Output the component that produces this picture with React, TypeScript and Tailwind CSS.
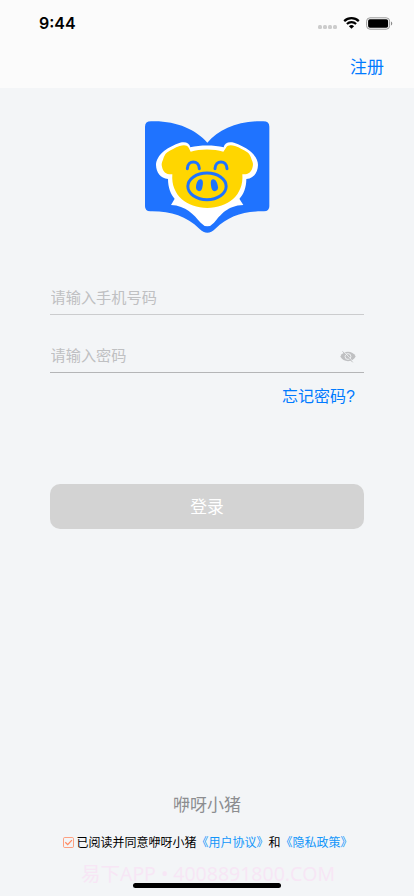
import { useState } from "react";

function StatusBar() {
  return (
    <div className="flex h-11 items-center justify-between pl-[39px] pr-[21px] pt-[2px]">
      <span className="font-['Inter'] text-[16px] font-semibold leading-5 text-black">9:44</span>
      <div className="flex items-center">
        <div className="mr-[6px] mt-[8px] flex gap-[1px]">
          {[0, 1, 2, 3].map((i) => (
            <span key={i} className="h-1 w-1 rounded-[1.5px] bg-[#cccccc]" />
          ))}
        </div>
        <svg width="17" height="12" viewBox="0 0 17 12" className="mr-[6px]">
          <path d="M1.2 4.1a10.4 10.4 0 0 1 14.6 0" fill="none" stroke="#000" strokeWidth="2.2" />
          <path d="M3.9 7a6.6 6.6 0 0 1 9.2 0" fill="none" stroke="#000" strokeWidth="2.1" />
          <path d="M8.5 11.8 5.9 9.2a3.8 3.8 0 0 1 5.2 0z" fill="#000" />
        </svg>
        <svg width="27" height="13" viewBox="0 0 27 13">
          <rect x="0.6" y="0.8" width="23" height="11.4" rx="3.4" fill="none" stroke="#9a9a9a" />
          <rect x="2.1" y="2.3" width="20" height="8.4" rx="1.8" fill="#000" />
          <path d="M25 4.5v4c1.7-.6 1.7-3.4 0-4z" fill="#8c8c8c" />
        </svg>
      </div>
    </div>
  );
}

function Logo() {
  return (
    <svg width="140" height="130" viewBox="0 0 420 390" fill="none">
      {/* Book */}
      <path
        d="M24 44Q24 28 42 28C115 25 176 52 211 92C246 52 305 25 379 28Q397 28 397 44V283Q397 298 381 298C320 297 275 312 235 350Q211 374 187 350C147 312 100 297 40 298Q24 298 24 283Z"
        fill="#1f73ff"
      />
      <path
        d="M114 259L102 279C147 281 170 308 191 332Q211 354 231 332C252 308 270 281 319 279L306 259L210 225Z"
        fill="#fff"
      />
      {/* Pig */}
      <path
        d="M160 106C157 92 145 88 129 92C112 97 96 106 82 116C65 130 57 145 57 159C58 182 70 198 93 201C93 226 101 247 114 262C130 284 165 301 211 301C257 301 290 284 306 262C320 247 328 226 328 201C351 198 362 182 363 159C363 145 355 130 338 116C324 106 308 97 291 92C275 88 263 92 260 106C230 99 190 99 160 106Z"
        fill="#fff"
      />
      <path
        d="M161 119L155 107C150 99 141 98 128 102C114 107 102 114 91 121C83 127 81 135 78 143C74 151 73 157 75 164C78 179 87 188 106 187C101 250 150 288 211 288C272 288 321 250 316 187C335 188 344 179 347 164C349 157 348 151 344 143C341 135 339 127 331 121C320 114 308 107 294 102C281 98 272 99 267 107L259 119C231 110 189 110 161 119Z"
        fill="#ffd600"
      />
      <g stroke="#1f73ff" strokeWidth="9" strokeLinecap="round">
        <path d="M151 170C152 143 186 143 187 170" />
        <path d="M234 170C235 143 269 143 270 170" />
      </g>
      <ellipse cx="210" cy="223" rx="57.5" ry="40" stroke="#1f73ff" strokeWidth="9" />
      <path d="M189 202C201 200 198 219 195 230C191 242 177 239 177 226C177 216 181 204 189 202Z" fill="#1f73ff" />
      <path d="M230 202C218 200 221 219 224 230C228 242 244 239 243 226C242 216 238 204 230 202Z" fill="#1f73ff" />
    </svg>
  );
}

function EyeOff() {
  return (
    <svg width="16" height="13" viewBox="0 0 16 13" fill="none">
      <path d="M.3 6.5C3.4.3 12.6.3 15.7 6.5 12.6 12.7 3.4 12.7.3 6.5Z" fill="#bfc0c2" />
      <circle cx="8" cy="6.5" r="2.9" stroke="#f3f5f7" strokeWidth="0.9" />
      <path d="m3.5 1.2 9.6 10.5" stroke="#f3f5f7" strokeWidth="0.8" />
      <path d="m2.5 1.3 10.2 11" stroke="#bfc0c2" strokeWidth="1" />
    </svg>
  );
}

export default function App() {
  const [phone, setPhone] = useState("");
  const [password, setPassword] = useState("");
  const [visible, setVisible] = useState(false);
  const [agreed, setAgreed] = useState(true);

  return (
    <div className="relative flex h-[896px] w-[414px] flex-col overflow-hidden bg-[#f3f5f7] font-['Liberation_Sans','Noto_Sans_CJK_SC',sans-serif]">
      {/* Header */}
      <header className="h-[88px] shrink-0 bg-[#fbfbfb]">
        <StatusBar />
        <div className="flex h-11 items-center justify-end pr-[30px] pt-[4px]">
          <button className="text-[17px] leading-6 text-[#007aff]">注册</button>
        </div>
      </header>

      <div className="mt-6 flex h-[130px] shrink-0 justify-center">
        <Logo />
      </div>

      {/* Login form */}
      <form className="mx-[50px] mt-[38px] flex flex-col" onSubmit={(e) => e.preventDefault()}>
        <div className="flex h-[35px] items-start border-b border-[#cbccce]">
          <input
            value={phone}
            onChange={(e) => setPhone(e.target.value)}
            placeholder="请输入手机号码"
            className="h-[34px] w-full bg-transparent pl-[0.5px] text-[15.2px] outline-none placeholder:text-[#bfc0c2]"
          />
        </div>
        <div className="mt-[23px] flex h-[35px] items-center border-b border-[#b4b5b7] pr-2">
          <input
            type={visible ? "text" : "password"}
            value={password}
            onChange={(e) => setPassword(e.target.value)}
            placeholder="请输入密码"
            className="h-[34px] min-w-0 flex-1 bg-transparent pl-[0.5px] text-[15.2px] outline-none placeholder:text-[#bfc0c2]"
          />
          <button type="button" className="mt-[2px]" onClick={() => setVisible(!visible)}>
            <EyeOff />
          </button>
        </div>
        <button type="button" className="mr-[9px] mt-[12px] self-end text-[16px] leading-6 text-[#007aff]">
          忘记密码?
        </button>
        <button className="mt-[75px] h-[45px] rounded-[10px] bg-[#d3d3d3] pt-[2px] text-[16.8px] text-white">登录</button>
      </form>

      {/* Footer */}
      <footer className="mt-auto flex h-[102px] flex-col items-center">
        <p className="text-[17px] leading-6 text-[#8c8d90]">咿呀小猪</p>
        <div className="mt-[15px] flex h-5 items-center whitespace-nowrap pl-[2px] text-[12px] text-black">
          <button onClick={() => setAgreed(!agreed)} className="mb-[2px] mr-[2px]">
            <svg width="11" height="11" viewBox="0 0 11 11" fill="none" stroke="#ff8a62">
              <rect x="0.5" y="0.5" width="10" height="10" rx="1.2" strokeWidth="0.8" />
              {agreed && <path d="m2.3 5.2 2.4 2.4 4.2-4.5" strokeWidth="1.3" />}
            </svg>
          </button>
          <span>已阅读并同意咿呀小猪</span>
          <span className="text-[#1296fa]">《用户协议》</span>
          <span>和</span>
          <span className="text-[#1296fa]">《隐私政策》</span>
        </div>
        <p className="mt-[9px] whitespace-nowrap pl-[2px] font-['Open_Sans','Noto_Sans_CJK_SC',sans-serif] text-[19.5px] leading-6 text-[#f7e6f5]">
          易下APP • 4008891800.COM
        </p>
      </footer>

      {/* Home indicator */}
      <div className="absolute bottom-[8px] left-[133px] h-[5px] w-[148px] rounded-full bg-black" />
    </div>
  );
}
